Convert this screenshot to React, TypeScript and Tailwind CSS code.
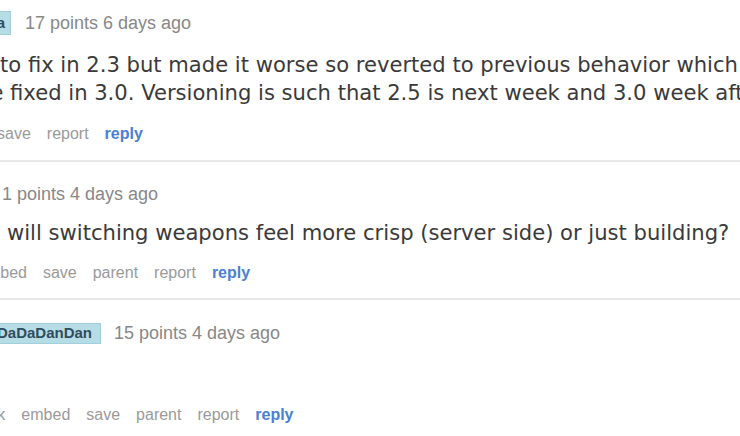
import React from "react";

const sans = { fontFamily: '"Liberation Sans", Arial, sans-serif' };
const body = { fontFamily: '"DejaVu Sans", Verdana, sans-serif' };

function Actions({ items, offset }: { items: string[]; offset: string }) {
  return (
    <div
      className={`flex items-center gap-4 h-[20px] leading-[20px] text-[16px] whitespace-nowrap ${offset}`}
      style={sans}
    >
      {items.map((t) => (
        <span key={t} className="text-[#9a9a9a]">
          {t}
        </span>
      ))}
      <span className="font-bold text-[#4a80d6]">reply</span>
    </div>
  );
}

export default function App() {
  return (
    <div className="w-[740px] h-[436px] overflow-hidden bg-white text-[#333]">
      {/* Comment 1 */}
      <div className="pt-[11px] pb-[16px] border-b-2 border-[#e8e8e8] overflow-hidden">
        <div className="flex items-center h-[24px] whitespace-nowrap" style={sans}>
          <span className="ml-[-90px] w-[101px] h-[24px] shrink-0 flex items-center justify-end pr-[5px] bg-[#b6dce6] border border-[#a3cfdb] text-[#2f4d5e] font-bold text-[15px] overflow-hidden">
            Ogma
          </span>
          <span className="ml-[14px] text-[18px] text-[#888]">17 points 6 days ago</span>
        </div>
        <div
          className="mt-[16px] text-[21.1px] leading-[28px] whitespace-nowrap text-[#3a3a3a]"
          style={body}
        >
          <div>to fix in 2.3 but made it worse so reverted to previous behavior which will</div>
          <div className="ml-[-23px]">be fixed in 3.0. Versioning is such that 2.5 is next week and 3.0 week after.</div>
        </div>
        <div className="mt-[17px]">
          <Actions items={["save", "report"]} offset="ml-[-3px]" />
        </div>
      </div>

      {/* Comment 2 */}
      <div className="pt-[20px] pb-[15px] border-b-2 border-[#e8e8e8] overflow-hidden">
        <div className="flex items-center h-[24px] whitespace-nowrap" style={sans}>
          <span className="ml-[2px] text-[18px] text-[#888]">1 points 4 days ago</span>
        </div>
        <div
          className="mt-[13px] text-[21.1px] leading-[28px] whitespace-nowrap text-[#3a3a3a] ml-[7px]"
          style={body}
        >
          will switching weapons feel more crisp (server side) or just building?
        </div>
        <div className="mt-[16px]">
          <Actions items={["embed", "save", "parent", "report"]} offset="ml-[-22px]" />
        </div>
      </div>

      {/* Comment 3 */}
      <div className="pt-[21px] overflow-hidden">
        <div className="flex items-center h-[24px] whitespace-nowrap" style={sans}>
          <span className="ml-[-20px] w-[121px] h-[21px] shrink-0 flex items-center justify-end pr-[8px] bg-[#b6dce6] border border-[#a3cfdb] text-[#2f4d5e] font-bold text-[15px] overflow-hidden">
            DaDaDanDan
          </span>
          <span className="ml-[13px] text-[18px] text-[#888]">15 points 4 days ago</span>
        </div>
        <div className="mt-[60px]">
          <Actions items={["permalink", "embed", "save", "parent", "report"]} offset="ml-[-64px]" />
        </div>
      </div>
    </div>
  );
}
